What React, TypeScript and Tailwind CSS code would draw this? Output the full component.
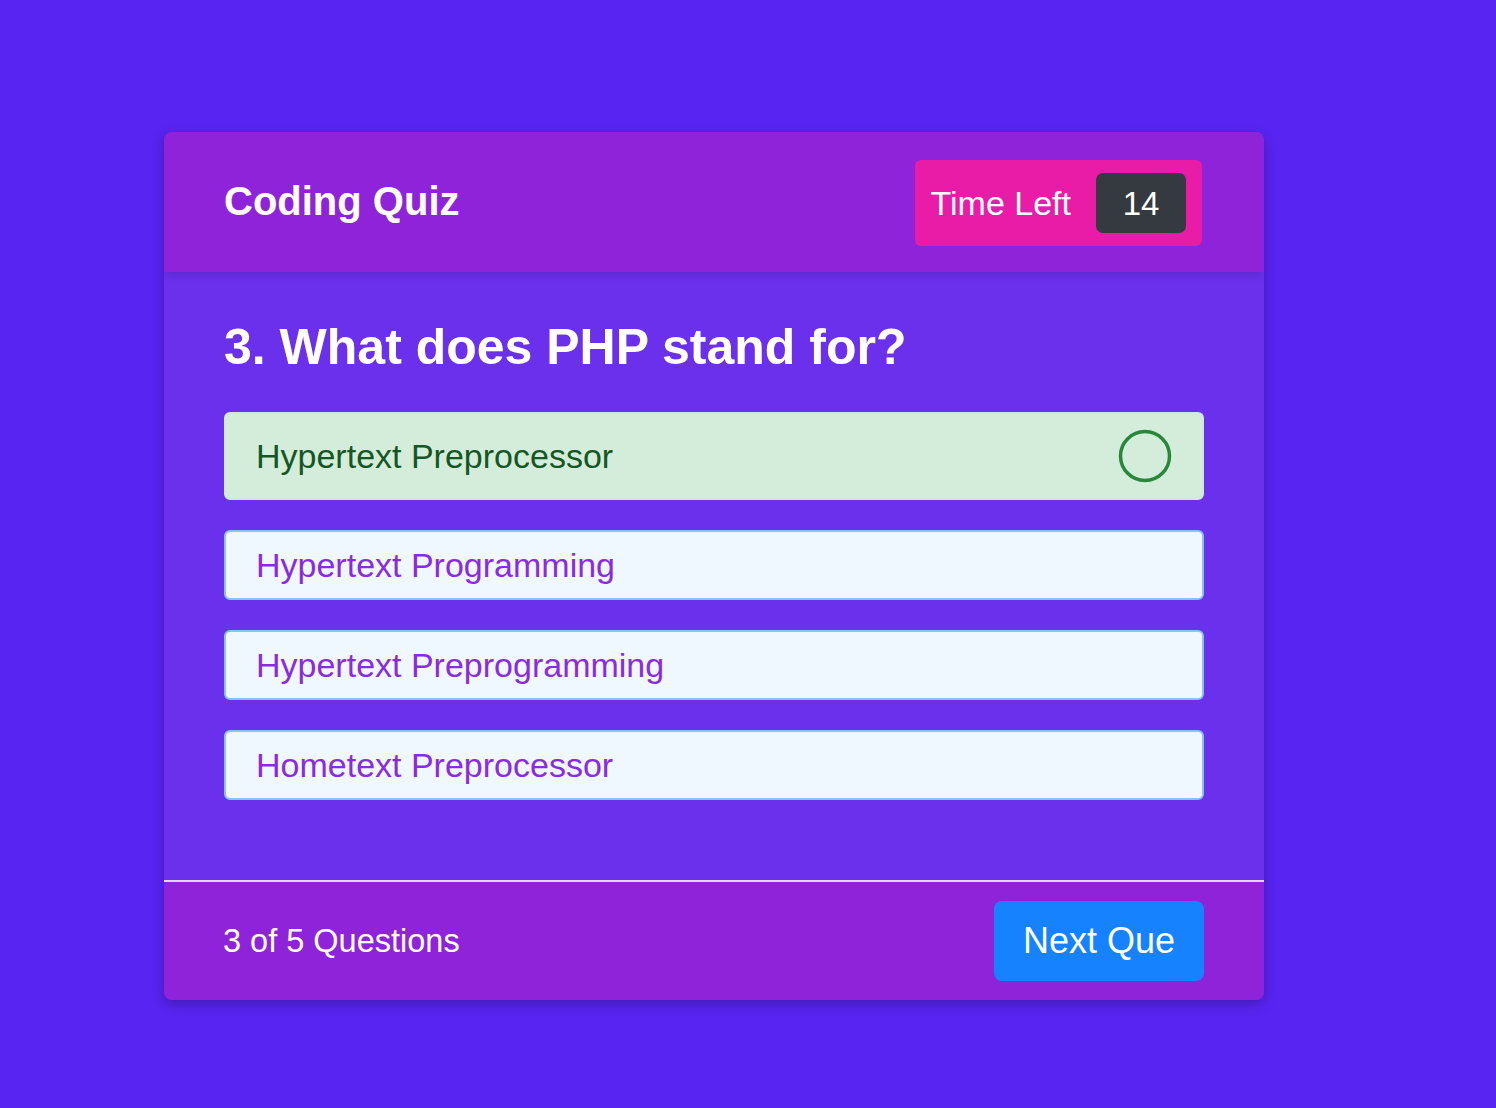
import React from "react";

const options = [
  "Hypertext Programming",
  "Hypertext Preprogramming",
  "Hometext Preprocessor",
];

export default function App() {
  return (
    <div
      className="min-h-[1108px] w-full bg-[#5824f1] pt-[132px] pl-[164px]"
      style={{ fontFamily: '"Liberation Sans", Arial, sans-serif' }}
    >
      <div className="w-[1100px] overflow-hidden rounded-[8px] bg-[#6a30eb] shadow-[0_4px_12px_rgba(0,0,0,0.25)]">
        {/* Header */}
        <div className="relative z-10 flex h-[140px] items-center justify-between bg-[#8e23d9] pl-[60px] pr-[62px] shadow-[0_3px_8px_rgba(0,0,0,0.12)]">
          <h1 className="mb-[3px] text-[40px] font-bold leading-none text-white">Coding Quiz</h1>
          <div className="mt-[2px] flex h-[86px] items-center rounded-[6px] bg-[#e91ca8] pl-[16px] pr-[16px]">
            <span className="text-[34px] leading-none text-white">Time Left</span>
            <div className="ml-[25px] flex h-[60px] w-[90px] items-center justify-center rounded-[7px] bg-[#353a40] text-[33px] leading-none text-white">
              14
            </div>
          </div>
        </div>

        {/* Body */}
        <div className="px-[60px] pt-[45px] pb-[80px]">
          <h2 className="mb-[35px] h-[60px] text-[50px] font-bold leading-[60px] text-white">
            3. What does PHP stand for?
          </h2>
          <div className="flex flex-col gap-[30px]">
            <div className="flex h-[88px] items-center justify-between rounded-[6px] border-2 border-[#cfe9d6] bg-[#d4edda] pl-[30px] pr-[30px]">
              <span className="text-[34px] leading-none text-[#155724]">Hypertext Preprocessor</span>
              <svg width="54" height="54" viewBox="0 0 54 54">
                <circle cx="27" cy="27" r="24.5" fill="none" stroke="#28873a" strokeWidth="3.5" />
              </svg>
            </div>
            {options.map((o) => (
              <div
                key={o}
                className="flex h-[70px] items-center rounded-[6px] border-2 border-[#87c3f8] bg-[#f0f8ff] pl-[30px]"
              >
                <span className="text-[34px] leading-none text-[#8a2be2]">{o}</span>
              </div>
            ))}
          </div>
        </div>

        {/* Footer */}
        <div className="flex h-[120px] items-center justify-between border-t-2 border-[#dcdcdc] bg-[#8e23d9] pl-[59px] pr-[60px]">
          <span className="text-[32.5px] leading-none text-white">3 of 5 Questions</span>
          <button className="flex h-[80px] w-[210px] items-center justify-center overflow-hidden whitespace-nowrap rounded-[8px] bg-[#1682fd] text-[36px] leading-none text-white">
            Next Que
          </button>
        </div>
      </div>
    </div>
  );
}
